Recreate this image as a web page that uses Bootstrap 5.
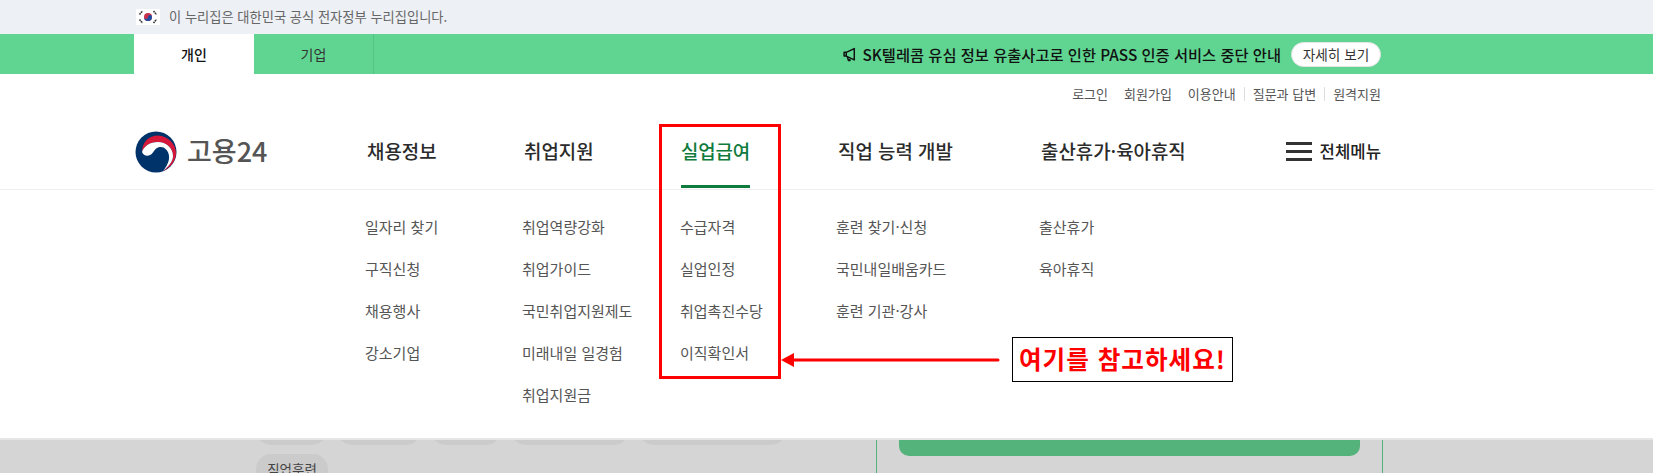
<!DOCTYPE html>
<html lang="ko">
<head>
    <meta charset="UTF-8">
    <meta name="viewport" content="width=device-width, initial-scale=1.0">
    <link href="https://cdn.jsdelivr.net/npm/bootstrap@5.3.0/dist/css/bootstrap.min.css" rel="stylesheet">
    <title>고용24</title>
    <style>
        html, body { height: 473px; overflow: hidden; }
        body {
            position: relative;
            background: #d5d5d5;
            font-family: "Noto Sans CJK KR", "Noto Sans", sans-serif;
            color: #222;
        }
        .wrap-in { width: 1247px; margin-left: 134px; }

        .gov-bar { height: 34px; background: #edf0f5; font-size: 13.25px; color: #666; }
        .gov-flag { width: 24px; height: 16px; background: #fff; margin: 0 9px 0 2px; }

        .tab-bar { height: 40px; background: #60d591; }
        .tab-item { width: 120px; font-size: 14px; color: #333; border-right: 1px solid #55c484; }
        .tab-item.on { background: #fff; color: #111; font-weight: 500; border-right: 0; }
        .notice-txt { font-size: 15.3px; font-weight: 500; color: #111; }
        .notice-btn {
            height: 25px; width: 90px; margin-left: 10px; border-radius: 13px;
            background: #fff; font-size: 13.6px; color: #333; border: 1px solid #e4e4e4;
        }

        .head-box { background: #fff; }
        .util-row { height: 40px; font-size: 13px; color: #555; gap: 16px; }
        .util-row .sep { border-left: 1px solid #ddd; padding-left: 8px; margin-left: -8px; line-height: 14px; }

        .menu-grid { display: grid; grid-template-columns: 231px 157px 158px 156px 203px 1fr; }
        .main-row { height: 76px; border-bottom: 1px solid #eee; }
        .main-row .wrap-in { height: 75px; }
        .logo-box { gap: 10px; font-size: 27px; font-weight: 500; color: #555; padding-left: 1px; }
        .main-item { font-size: 18.9px; font-weight: 500; color: #2b2b2b; padding-left: 2px; position: relative; height: 75px; display: flex; align-items: center; }
        .main-item.on { color: #0f7b3d; padding-left: 1px; letter-spacing: -.15px; }
        .main-item.on .under-bar { position: absolute; left: 1px; bottom: 1px; width: 69px; height: 3px; background: #0f7b3d; }
        .all-menu { font-size: 16.7px; font-weight: 500; color: #222; gap: 8px; }
        .burger { width: 26px; }
        .burger i { display: block; height: 3px; background: #333; margin: 5px 0; }

        .sub-panel { height: 250px; padding-top: 30px; border-bottom: 2px solid #e6e6e6; }
        .sub-item { font-size: 15px; color: #555; height: 42px; line-height: 42px; margin-top: -14px; margin-bottom: 14px; }

        .low-area { height: 33px; overflow: hidden; position: relative; }
        .pill-line { width: 545px; margin-left: 256px; gap: 9px 10px; margin-top: -25px; }
        .pill-bit { height: 30px; border-radius: 15px; background: #cbcbcb; font-size: 13.5px; color: #444; text-align: center; line-height: 30px; }
        .side-col {
            position: absolute; left: 876px; top: 0; width: 507px; height: 33px;
            border-left: 1px solid #55b37d; border-right: 1px solid #55b37d;
        }
        .side-card { height: 16px; margin: 0 22px; background: #54b27b; border-radius: 0 0 10px 10px; }

        .mark-box { position: absolute; left: 659px; top: 124px; width: 122px; height: 255px; border: 3px solid #f00; }
        .mark-arrow { position: absolute; left: 780px; top: 350px; }
        .mark-label {
            position: absolute; left: 1012px; top: 337px; width: 221px; height: 45px; padding-bottom: 2px;
            border: 1px solid #000; background: #fff; color: #f00;
            font-size: 24.6px; font-weight: 700; letter-spacing: 1px;
        }
    </style>
</head>
<body>
    <div class="gov-bar d-flex align-items-center">
        <div class="wrap-in d-flex align-items-center">
            <div class="gov-flag d-flex align-items-center justify-content-center">
                <svg width="24" height="16" viewBox="0 0 24 16">
                    <circle cx="12" cy="8" r="4" fill="#c8304b"/>
                    <path d="M8 8a4 4 0 0 0 8 0a2 2 0 0 0-4 0a2 2 0 0 1-4 0z" fill="#1f4da1"/>
                    <g stroke="#333" stroke-width="1.6" stroke-dasharray="1.6 .6">
                        <path d="M3.500 5.500l3-3.500M17.500 2l3 3.500M3.500 10.500l3 3.500M17.500 14l3-3.500"/>
                    </g>
                </svg>
            </div>
            <span>이 누리집은 대한민국 공식 전자정부 누리집입니다.</span>
        </div>
    </div>

    <div class="tab-bar">
        <div class="wrap-in d-flex h-100 align-items-stretch">
            <div class="tab-item on d-flex align-items-center justify-content-center">개인</div>
            <div class="tab-item d-flex align-items-center justify-content-center">기업</div>
            <div class="ms-auto d-flex align-items-center">
                <svg width="16" height="15" viewBox="0 0 14 14" class="me-1">
                    <path d="M1.500 5v3.500h2L11 12V1.500L3.500 5zM3.500 5v3.500M4.500 9l1 3.500h1.500l-.8-3" fill="none" stroke="#111" stroke-width="1.400" stroke-linejoin="round"/>
                </svg>
                <span class="notice-txt">SK텔레콤 유심 정보 유출사고로 인한 PASS 인증 서비스 중단 안내</span>
                <div class="notice-btn d-flex align-items-center justify-content-center">자세히 보기</div>
            </div>
        </div>
    </div>

    <div class="head-box">
        <div class="wrap-in util-row d-flex align-items-center justify-content-end">
            <span>로그인</span>
            <span>회원가입</span>
            <span>이용안내</span>
            <span class="sep">질문과 답변</span>
            <span class="sep">원격지원</span>
        </div>

        <div class="main-row">
            <div class="wrap-in menu-grid">
                <div class="logo-box d-flex align-items-center">
                    <svg width="42" height="42" viewBox="0 0 42 42">
                        <circle cx="21" cy="21" r="20.500" fill="#00336a"/>
                        <path d="M7 21C7 11 14 4.500 23 4.500C33 5 41 13 41 22C41 30 35 37 28 40C34 35 38 30 38 25C38 17 31 11 23 11C15 11 9 15 7 21Z" fill="#d6183b"/>
                        <path d="M7 21C9 15 15 11 23 11C31 11 38 17 38 25C38 30 34 35 28 40C32 35 34.500 30 34 25C33.500 19 29 15.500 25 16C21 16.500 20 19 17.500 22C14.500 26 8.500 25.500 7 21Z" fill="#fff"/>
                    </svg>
                    <span>고용24</span>
                </div>
                <div class="main-item">채용정보</div>
                <div class="main-item">취업지원</div>
                <div class="main-item on">실업급여<span class="under-bar"></span></div>
                <div class="main-item">직업 능력 개발</div>
                <div class="main-item justify-content-between">
                    <span>출산휴가·육아휴직</span>
                    <div class="all-menu d-flex align-items-center">
                        <div class="burger"><i></i><i></i><i></i></div>
                        <span>전체메뉴</span>
                    </div>
                </div>
            </div>
        </div>

        <div class="sub-panel">
            <div class="wrap-in menu-grid">
                <div></div>
                <div><div class="sub-item">일자리 찾기</div><div class="sub-item">구직신청</div><div class="sub-item">채용행사</div><div class="sub-item">강소기업</div></div>
                <div><div class="sub-item">취업역량강화</div><div class="sub-item">취업가이드</div><div class="sub-item">국민취업지원제도</div><div class="sub-item">미래내일 일경험</div><div class="sub-item">취업지원금</div></div>
                <div><div class="sub-item">수급자격</div><div class="sub-item">실업인정</div><div class="sub-item">취업촉진수당</div><div class="sub-item">이직확인서</div></div>
                <div><div class="sub-item">훈련 찾기·신청</div><div class="sub-item">국민내일배움카드</div><div class="sub-item">훈련 기관·강사</div></div>
                <div><div class="sub-item">출산휴가</div><div class="sub-item">육아휴직</div></div>
            </div>
        </div>
    </div>

    <div class="low-area">
        <div class="pill-line d-flex flex-wrap">
            <div class="pill-bit" style="width:71px"></div>
            <div class="pill-bit" style="width:84px"></div>
            <div class="pill-bit" style="width:70px"></div>
            <div class="pill-bit" style="width:118px"></div>
            <div class="pill-bit" style="width:147px"></div>
            <div class="pill-bit" style="width:72px">직업훈련</div>
        </div>
        <div class="side-col"><div class="side-card"></div></div>
    </div>

    <div class="mark-box"></div>
    <svg class="mark-arrow" width="220" height="20" viewBox="0 0 220 20">
        <path d="M218 10H12" stroke="#f00" stroke-width="3" stroke-linecap="round"/>
        <path d="M1 10L14 3V17Z" fill="#f00"/>
    </svg>
    <div class="mark-label d-flex align-items-center justify-content-center">여기를 참고하세요!</div>
</body>
</html>
